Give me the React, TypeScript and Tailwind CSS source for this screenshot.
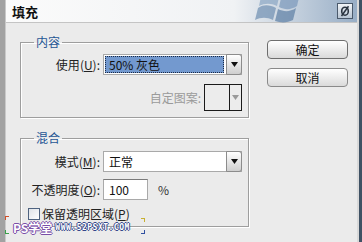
import React from "react";

const cjk = { fontFamily: '"Noto Sans CJK SC", "Noto Sans", sans-serif' };

// small black triangle used in the dropdown buttons
const DownArrow = ({ color = "#111" }: { color?: string }) => (
  <svg width="7" height="5" viewBox="0 0 7 5">
    <path d="M0 0 H7 L3.5 5 Z" fill={color} />
  </svg>
);

const DropButton = () => (
  <div className="flex h-full w-[16px] items-center justify-center rounded-r-[3px] border border-[#8c8c8c] bg-gradient-to-b from-[#ffffff] to-[#cfcfcf]">
    <DownArrow />
  </div>
);

const Label = ({ text, hot, width = "w-[79px]" }: { text: string; hot: string; width?: string }) => (
  <div className={`${width} pr-[3px] text-right text-[12px] leading-[14px] text-[#222]`}>
    {text}(<span className="underline">{hot}</span>):
  </div>
);

const WindowsLogo = () => (
  <svg width="56" height="23" viewBox="0 0 56 23" className="opacity-70">
    <path d="M4 8 C10 4 16 5 22 8 L19 20 C13 17 7 17 1 20 Z" fill="#6f8fb2" />
    <path d="M24 9 C30 12 36 12 42 8 L39 20 C33 23 27 23 21 21 Z" fill="#5d7fa5" />
    <path d="M8 -8 C14 -11 20 -10 26 -7 L23 6 C17 3 11 3 5 6 Z" fill="#8aa6c4" />
    <path d="M28 -6 C34 -3 40 -3 46 -7 L43 6 C37 10 31 10 25 7 Z" fill="#7a98bb" />
  </svg>
);

const CloseIcon = () => (
  <div className="flex h-[16px] w-[16px] items-center justify-center border border-[#4b5a6c] bg-gradient-to-b from-[#f2f5f8] to-[#b9c6d4]">
    <svg width="12" height="12" viewBox="0 0 12 12">
      <ellipse cx="6" cy="6.2" rx="3.3" ry="4" fill="none" stroke="#2a3440" strokeWidth="1.6" />
      <path d="M9.5 1.2 L2.5 11" stroke="#2a3440" strokeWidth="1.5" />
    </svg>
  </div>
);

export default function App() {
  return (
    <div className="relative flex h-[242px] w-[362px] overflow-hidden bg-[#ebebeb]" style={cjk}>
      {/* left frame */}
      <div className="w-[6px] shrink-0 border-r border-[#c9c9c9] bg-[#a2a2a2]" />
      <div className="flex min-w-0 flex-1 flex-col">
        {/* title bar */}
        <div className="flex h-[23px] shrink-0 items-center border-b border-[#c4c4c4] bg-gradient-to-r from-[#fbfbfb] via-[#f0f2f4] via-65% to-[#98aec6] pl-[6px] pr-[4px]">
          <span className="text-[13px] font-bold leading-none text-[#111]">填充</span>
          <div className="ml-auto mr-[27px] flex h-full items-start">
            <WindowsLogo />
          </div>
          <CloseIcon />
        </div>

        {/* body */}
        <div className="flex flex-1 pl-[14px]">
          <div className="flex w-[229px] flex-col">
            <fieldset className="mt-[11px] border border-[#9e9e9e] pb-[6px] pr-[6px] shadow-[1px_1px_0_#ffffff,inset_1px_1px_0_#ffffff]">
              <legend className="ml-[13px] px-[2px] text-[12px] leading-[16px] text-[#1f5594]">内容</legend>
              <div className="mt-[4px] flex h-[21px] items-center">
                <Label text="使用" hot="U" width="w-[82px]" />
                <div className="flex h-[21px] flex-1 items-stretch border border-[#a9a9a9] bg-white p-[1px] pr-0">
                  <div className="flex flex-1 items-center border border-dotted border-[#1b2a44] bg-[#7399cf] pl-[3px] text-[12px] text-[#111]">
                    50% 灰色
                  </div>
                  <div className="ml-[2px] -my-[2px] -mr-[1px]">
                    <DropButton />
                  </div>
                </div>
              </div>
              <div className="mt-[9px] flex items-center justify-end">
                <span className="mr-[3px] text-[12px] text-[#9a9a9a]">自定图案:</span>
                <div className="flex h-[27px] w-[38px] border border-[#1a1a1a] bg-[#ececec]">
                  <div className="flex-1 border-r border-[#1a1a1a]" />
                  <div className="flex w-[11px] items-center justify-center">
                    <DownArrow color="#9a9a9a" />
                  </div>
                </div>
              </div>
            </fieldset>

            <fieldset className="mt-[12px] border border-[#9e9e9e] pb-[6px] pr-[6px] shadow-[1px_1px_0_#ffffff,inset_1px_1px_0_#ffffff]">
              <legend className="ml-[13px] px-[2px] text-[12px] leading-[16px] text-[#1f5594]">混合</legend>
              <div className="mt-[5px] flex h-[21px] items-center">
                <Label text="模式" hot="M" width="w-[82px]" />
                <div className="flex h-[21px] flex-1 items-stretch border border-[#a9a9a9] bg-white">
                  <div className="flex flex-1 items-center pl-[5px] text-[12px] text-[#111]">正常</div>
                  <div className="-my-[1px] -mr-[1px]">
                    <DropButton />
                  </div>
                </div>
              </div>
              <div className="mt-[7px] flex h-[21px] items-center">
                <Label text="不透明度" hot="O" width="w-[82px]" />
                <div className="flex h-[21px] w-[45px] items-center border border-[#a9a9a9] border-t-[#7a7a7a] bg-white pl-[5px] text-[12px] text-[#111]">
                  100
                </div>
                <span className="ml-[10px] text-[12px] text-[#333]">%</span>
              </div>
              <div className="mt-[7px] flex h-[13px] items-center pl-[7px]">
                <div className="h-[12px] w-[12px] border border-[#4f6380] bg-gradient-to-br from-[#dfe3e8] to-[#ffffff]" />
                <span className="ml-[2px] text-[12px] leading-none text-[#222]">
                  保留透明区域(<span className="underline">P</span>)
                </span>
              </div>
            </fieldset>
          </div>

          {/* buttons */}
          <div className="ml-[18px] mt-[17px] flex w-[81px] flex-col gap-[9px]">
            <button className="h-[19px] rounded-[4px] border border-[#6e6e6e] bg-gradient-to-b from-[#ffffff] to-[#dadada] text-[12px] leading-none text-[#111]">
              确定
            </button>
            <button className="h-[19px] rounded-[4px] border border-[#8a8a8a] bg-gradient-to-b from-[#ffffff] to-[#dadada] text-[12px] leading-none text-[#111]">
              取消
            </button>
          </div>
        </div>
      </div>
      {/* right frame */}
      <div className="flex w-[5px] shrink-0">
        <div className="w-[2px] bg-[#d9d9d9]" />
        <div className="flex-1 bg-[#3f5164]" />
      </div>

      {/* watermark */}
      <div className="absolute left-[5px] top-[216px] flex items-center gap-[3px]">
        <span className="absolute left-0 top-0 h-[4px] w-[4px] border-l border-t border-[#d0502a]" />
        <span className="absolute left-0 top-[14px] h-[4px] w-[4px] border-b border-l border-[#3aa04a]" />
        <span
          className="ml-[8px] mt-[6px] text-[12px] font-bold leading-none text-white"
          style={{ textShadow: "1px 0 #7a4fa8, -1px 0 #7a4fa8, 0 1px #7a4fa8, 0 -1px #7a4fa8" }}
        >
          PS学堂
        </span>
        <span
          className="mt-[6px] text-[8px] font-bold leading-none tracking-[0.5px] text-white"
          style={{ fontFamily: '"DejaVu Sans Mono", monospace', textShadow: "1px 0 #34478a, -1px 0 #34478a, 0 1px #34478a, 0 -1px #34478a" }}
        >
          WWW.52PSXT.COM
        </span>
        <span className="absolute left-[136px] top-[2px] h-[4px] w-[4px] border-r border-t border-[#c8b030]" />
        <span className="absolute left-[136px] top-[14px] h-[4px] w-[4px] border-b border-r border-[#3050a0]" />
      </div>
    </div>
  );
}
